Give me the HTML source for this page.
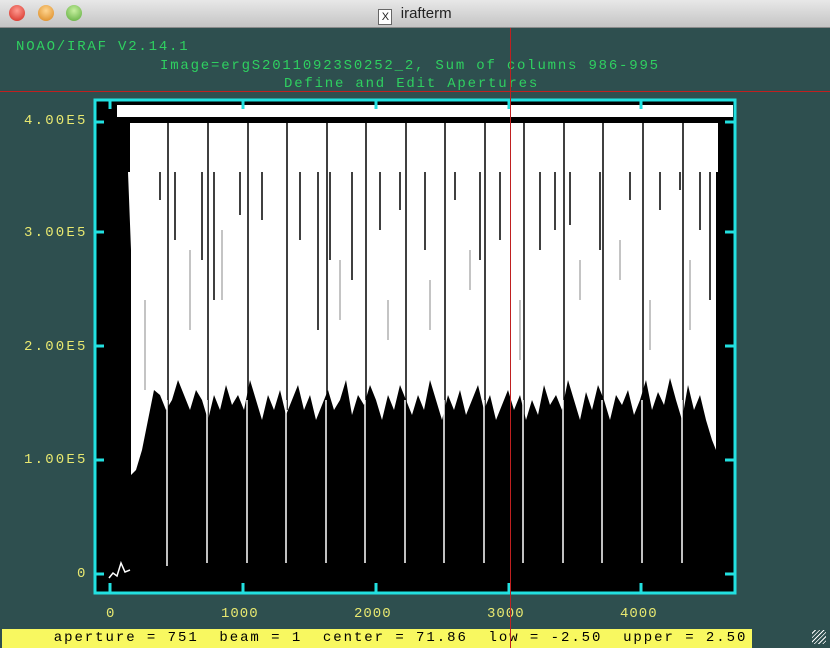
<!DOCTYPE html>
<html><head><style>
body{margin:0;width:830px;height:648px;overflow:hidden;background:#2e4f4f;position:relative;font-family:"Liberation Mono",monospace}
#tb{position:absolute;left:0;top:0;width:830px;height:27px;background:linear-gradient(#e8e8e8,#c4c4c4);border-bottom:1px solid #8a8a8a}
.dot{position:absolute;top:5px;width:16px;height:16px;border-radius:50%}
#title{position:absolute;top:5px;left:0;width:830px;text-align:center;font:15px "Liberation Sans",sans-serif;color:#222}
.g{position:absolute;color:#2fd060;font-size:14px;letter-spacing:1.8px;white-space:pre}
.y{position:absolute;color:#e8e870;font-size:14px;letter-spacing:1px;white-space:pre}
.yl{letter-spacing:2.2px}
#st{position:absolute;left:2px;top:629px;width:750px;height:19px;background:#f8f860;color:#000;font-size:14px;letter-spacing:1.95px;white-space:pre;line-height:19px}
</style></head><body>
<div id="tb">
<div class="dot" style="left:9px;background:radial-gradient(circle at 50% 35%,#ff9a90,#d2281e)"></div>
<div class="dot" style="left:38px;background:radial-gradient(circle at 50% 35%,#ffd590,#d8841a)"></div>
<div class="dot" style="left:66px;background:radial-gradient(circle at 50% 35%,#c8f0a0,#58a838)"></div>
<div id="title"><span style="display:inline-block;width:12px;height:14px;border:1px solid #666;background:#fff;font-size:11px;line-height:14px;vertical-align:-2px">X</span>&nbsp; irafterm</div>
</div>
<div class="g" style="left:16px;top:39px">NOAO/IRAF V2.14.1</div>
<div class="g" style="left:160px;top:58px">Image=ergS20110923S0252_2, Sum of columns 986-995</div>
<div class="g" style="left:284px;top:76px">Define and Edit Apertures</div>
<svg style="position:absolute;left:0;top:0" width="830" height="648">
<rect x="95" y="100" width="640" height="493" fill="#000"/>
<rect x="117" y="105" width="616" height="12" fill="#fff"/>
<path fill="#fff" d="M130 123 L718 123 L718 172 L716 172 L716 450 L712 440 L706 420 L700 395 L694 410 L688 385 L682 420 L676 400 L670 378 L664 405 L658 392 L652 410 L646 380 L640 400 L634 415 L628 390 L622 405 L616 395 L610 420 L604 400 L598 385 L592 410 L586 392 L580 420 L574 400 L568 380 L562 410 L556 395 L550 405 L544 385 L538 415 L532 400 L526 420 L520 395 L514 410 L508 390 L502 405 L496 420 L490 395 L484 410 L478 385 L472 400 L466 415 L460 390 L454 410 L448 395 L442 420 L436 400 L430 380 L424 410 L418 395 L412 415 L406 400 L400 385 L394 410 L388 395 L382 420 L376 400 L370 385 L364 405 L358 395 L352 415 L346 380 L340 400 L334 410 L328 390 L322 405 L316 420 L310 395 L304 410 L298 385 L292 400 L286 415 L280 390 L274 410 L268 395 L262 420 L256 400 L250 380 L244 410 L238 395 L232 405 L226 385 L220 410 L214 395 L208 420 L202 400 L196 390 L190 410 L184 395 L178 380 L172 400 L166 410 L160 395 L154 390 L148 420 L142 450 L136 470 L131 475 L131 250 L128 172 L130 172 Z"/>
<path stroke="#000" stroke-width="1.5" fill="none" d="M168 118V420M208 118V440M248 118V430M287 118V410M327 118V420M366 118V440M406 118V420M445 118V425M485 118V410M524 118V430M564 118V420M603 118V440M643 118V425M683 118V420
M160 172V200M175 172V240M202 172V260M214 172V300M240 172V215M262 172V220M300 172V240M318 172V330M330 172V260M352 172V280M380 172V230M400 172V210M425 172V250M455 172V200M480 172V260M500 172V240M540 172V250M555 172V230M570 172V225M600 172V250M630 172V200M660 172V210M680 172V190M700 172V230M710 172V300"/>
<path stroke="#888" stroke-width="1" fill="none" d="M145 300V390M190 250V330M222 230V300M340 260V320M388 300V340M430 280V330M470 250V290M520 300V360M580 260V300M620 240V280M650 300V350M690 260V330"/>
<path stroke="#fff" stroke-width="1.5" fill="none" d="M167 400V566M207 400V563M247 400V563M286 400V563M326 400V563M365 400V563M405 400V563M444 400V563M484 400V563M523 400V563M563 400V563M602 400V563M642 400V563M682 400V563M109 578L113 573L117 576L121 563L125 572L130 570"/>
<rect x="95" y="100" width="640" height="493" fill="none" stroke="#22e0e0" stroke-width="3"/>
<g stroke="#22e0e0" stroke-width="3">
<path d="M110 100V109M243 100V109M376 100V109M509 100V109M641 100V109M110 583V593M243 583V593M376 583V593M509 583V593M641 583V593M95 122H104M95 232H104M95 346H104M95 460H104M95 574H104M725 122H735M725 232H735M725 346H735M725 460H735M725 574H735"/>
</g>
</svg>
<div class="y yl" style="left:24px;top:113px">4.00E5</div>
<div class="y yl" style="left:24px;top:225px">3.00E5</div>
<div class="y yl" style="left:24px;top:339px">2.00E5</div>
<div class="y yl" style="left:24px;top:452px">1.00E5</div>
<div class="y" style="left:77px;top:566px">0</div>
<div class="y" style="left:106px;top:606px">0</div>
<div class="y" style="left:221px;top:606px">1000</div>
<div class="y" style="left:354px;top:606px">2000</div>
<div class="y" style="left:487px;top:606px">3000</div>
<div class="y" style="left:620px;top:606px">4000</div>
<div id="st">     aperture = 751  beam = 1  center = 71.86  low = -2.50  upper = 2.50</div>
<div style="position:absolute;left:0;top:91px;width:830px;height:1px;background:#c02020"></div>
<div style="position:absolute;left:510px;top:28px;width:1px;height:620px;background:#c02020"></div>
<div style="position:absolute;left:812px;top:630px;width:14px;height:14px;background:repeating-linear-gradient(135deg,#2e4f4f 0 2px,#fff 2px 3px)"></div>
</body></html>
